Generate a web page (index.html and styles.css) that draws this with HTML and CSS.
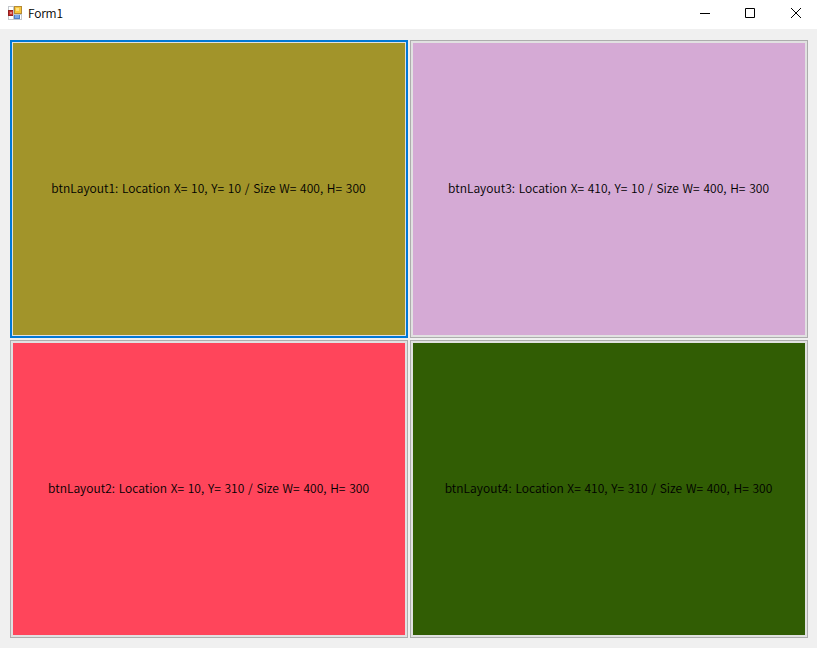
FILE: index.html
```html
<!DOCTYPE html>
<html lang="en">
<head>
<meta charset="utf-8">
<title>Form1</title>
<link rel="stylesheet" href="styles.css">
</head>
<body>
<header class="titlebar">
  <svg class="app-icon" width="14" height="14" viewBox="0 0 14 14" shape-rendering="crispEdges">
    <path fill="#c3c7cc" d="M0 0h14v14H0z"/>
    <path fill="#fff" d="M1 1h4v3H1zM1 10h4v3H1zM12 9h1v4h-1z"/>
    <path fill="#b58b35" d="M6 0h8v8H6z"/><path fill="#f7c63c" d="M7 1h6v6H7z"/><path fill="#ffe384" d="M8 2h3v3H8z"/>
    <path fill="#8e2020" d="M0 4h5v6H0z"/><path fill="#c92f2b" d="M1 5h4v4H1z"/><path fill="#e18a80" d="M2 6h2v2H2z"/>
    <path fill="#4f7fc8" d="M6 9h6v4H6z"/><path fill="#79a7e8" d="M7 9h4v3H7z"/>
  </svg>
  <h1 class="title">Form1</h1>
  <div class="controls">
    <button class="control" aria-label="Minimize"><svg width="12" height="12"><path d="M1 6.5h10"/></svg></button>
    <button class="control" aria-label="Maximize"><svg width="12" height="12"><path d="M1.5 1.5h9v9h-9z"/></svg></button>
    <button class="control" aria-label="Close"><svg width="12" height="12"><path d="M1 1l10 10M11 1L1 11"/></svg></button>
  </div>
</header>
<main class="form">
  <button class="tile olive focused"><span class="label">btnLayout1: Location X= 10, Y= 10 / Size W= 400, H= 300</span></button>
  <button class="tile plum"><span class="label">btnLayout3: Location X= 410, Y= 10 / Size W= 400, H= 300</span></button>
  <button class="tile red"><span class="label">btnLayout2: Location X= 10, Y= 310 / Size W= 400, H= 300</span></button>
  <button class="tile green"><span class="label">btnLayout4: Location X= 410, Y= 310 / Size W= 400, H= 300</span></button>
</main>
</body>
</html>
```
FILE: styles.css
```css
* { box-sizing: border-box; }
body {
  margin: 0;
  height: 648px;
  overflow: hidden;
  background: #f0f0f0;
  font-family: "Noto Sans CJK KR", sans-serif;
  color: #000;
}
button { font: inherit; color: inherit; border: 0; padding: 0; }
.titlebar {
  display: flex;
  align-items: center;
  height: 29px;
  padding: 0 0 3px 8px;
  background: #fff;
}
.app-icon { flex: none; }
.title {
  margin: 0 0 0 6px;
  font-size: 12px;
  font-weight: 350;
  letter-spacing: -0.2px;
  line-height: 20px;
}
.controls { display: flex; margin-left: auto; }
.control {
  display: grid;
  place-items: center;
  width: 45px;
  height: 26px;
  background: none;
}
.control:last-child { padding-left: 3px; }
.control svg { fill: none; stroke: #000; stroke-width: 1; }
.form {
  display: grid;
  grid-template-columns: 398px 398px;
  grid-template-rows: 298px 298px;
  gap: 2px;
  padding: 11px 10px;
}
.tile {
  display: flex;
  align-items: center;
  justify-content: center;
  border: 1px solid #adadad;
  box-shadow: inset 0 0 0 2px #e1e1e1;
  font-size: 12px;
  font-weight: 350;
  letter-spacing: 0.02px;
  word-spacing: 1px;
  white-space: nowrap;
}
.focused {
  border: 2px solid #0078d7;
  box-shadow: inset 0 0 0 1px #e1e1e1;
}
.olive { background: #a2942a; }
.plum { background: #d5aad5; }
.red { background: #ff455b; }
.green { background: #315d04; }
.label { line-height: 18px; padding: 0 1px 2px 0; }
```
